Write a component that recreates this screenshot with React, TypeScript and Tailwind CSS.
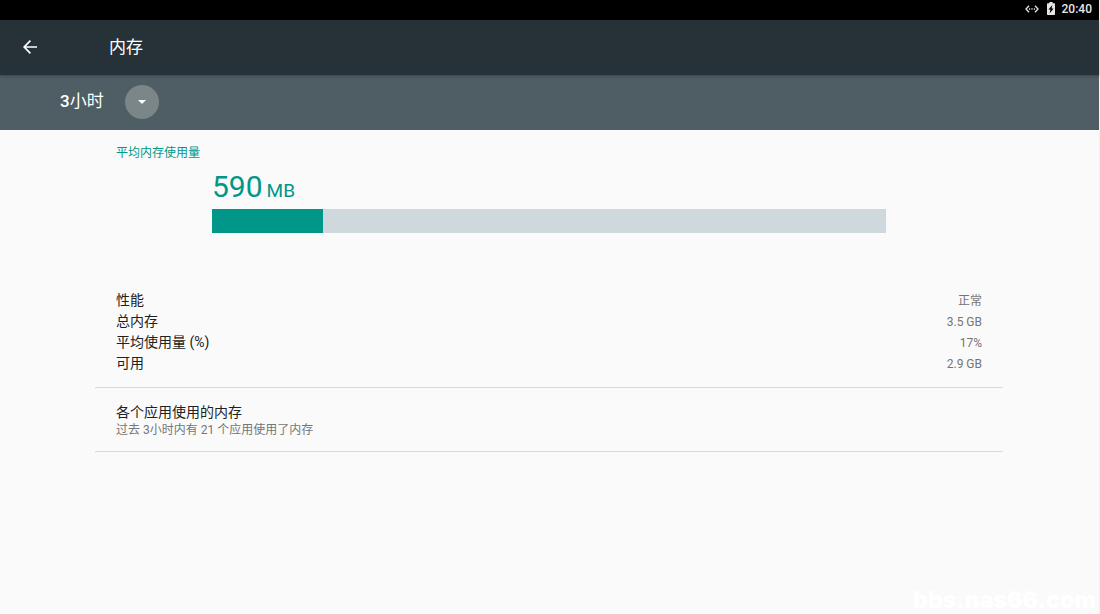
import { useState } from 'react'

const RANGES = ['3小时', '6小时', '12小时', '1天']

const STATS = [
  { label: '性能',           value: '正常' },
  { label: '总内存',         value: '3.5 GB' },
  { label: '平均使用量 (%)', value: '17%' },
  { label: '可用',           value: '2.9 GB' },
]

// used share of the bar, in percent
const USED = 16.5

function StatusBar() {
  return (
    <div className="h-5 flex items-center justify-end gap-2 pr-[7px] pb-[3px] bg-black text-[#e6e6e6]">
      <svg width="14" height="8" viewBox="0 0 14 8" fill="none" stroke="currentColor" strokeWidth="1.3">
        <path d="M4 0.8L1 4l3 3.2M10 0.8L13 4l-3 3.2" />
        <path d="M4 4h1.2M6.4 4h1.2M8.8 4h1.2" />
      </svg>
      <svg width="8" height="13" viewBox="0 0 8 13">
        <path fill="currentColor" d="M2.4 0h3.2v1.3H7.3a.7.7 0 0 1 .7.7v10.3a.7.7 0 0 1-.7.7H.7a.7.7 0 0 1-.7-.7V2a.7.7 0 0 1 .7-.7h1.7z" />
        <path fill="#000" d="M5.4 3L1.4 7.5h2L2.6 11.4l4-4.8h-2z" />
      </svg>
      <span className="text-[12px] leading-4 font-medium -ml-px">20:40</span>
    </div>
  )
}

// Time range drop-down, the caret disc sits over the right end of the select
function RangePicker() {
  const [range, setRange] = useState(RANGES[0])
  return (
    <div className="relative w-[99px] h-[34px]">
      <select
        aria-label="时间范围"
        value={range}
        onChange={e => setRange(e.target.value)}
        className="appearance-none w-full h-full bg-transparent text-white text-[17px] font-['Roboto_Medium',Roboto,'Noto_Sans_CJK_SC',sans-serif] outline-none">
        {RANGES.map(r => <option key={r} value={r} className="text-black">{r}</option>)}
      </select>
      <span className="absolute right-0 top-0 size-[34px] rounded-full bg-[#7b8689] flex items-center justify-center pointer-events-none">
        <svg width="8" height="4" viewBox="0 0 8 4" fill="#fff"><path d="M0 0h8L4 4z" /></svg>
      </span>
    </div>
  )
}

export default function App() {
  return (
    <div className="relative min-h-screen bg-[#fafafa] border-r border-[#f2f2f8] font-[Roboto,'Noto_Sans_CJK_SC',sans-serif]">
      <StatusBar />

      <header className="relative h-[55px] flex items-center pl-[23px] pb-px bg-[#263238] text-white shadow-[0_1px_3px_rgba(0,0,0,0.3)]">
        <button aria-label="返回" className="w-[86px]">
          <svg width="14" height="14" viewBox="0 0 14 14" fill="none" stroke="currentColor" strokeWidth="1.7">
            <path d="M14 7H1.4M7.4 0.7L1.2 7l6.2 6.3" />
          </svg>
        </button>
        <h1 className="text-[17px] leading-6">内存</h1>
      </header>

      <div className="h-[55px] flex items-center pl-[60px] pb-px bg-[#4f5e65]">
        <RangePicker />
      </div>

      <main className="pl-[95px] pr-24">
        <section className="px-[21px] pt-[13px]">
          <h2 className="text-[12px] leading-5 text-[#009688]">平均内存使用量</h2>
          <div className="px-24 pt-[7px]">
            <p className="flex items-baseline gap-1 text-[#009688]">
              <span className="text-[30px] leading-[34px]">590</span>
              <span className="text-[19px] leading-5">MB</span>
            </p>
            <div className="h-6 mt-[5px] bg-[#cfd8dc]">
              <div className="h-full bg-[#009688]" style={{ width: `${USED}%` }} />
            </div>
          </div>
        </section>

        <section className="px-[21px] pt-[57px] pb-[13px] border-b border-[#dadada]">
          <table className="w-full">
            <tbody>
              {STATS.map(s => (
                <tr key={s.label}>
                  <th scope="row" className="p-0 text-left text-[14px] leading-[21px] font-normal text-[#212121]">{s.label}</th>
                  <td className="p-0 pt-0.5 text-right text-[12px] leading-[19px] text-[#757575]">{s.value}</td>
                </tr>
              ))}
            </tbody>
          </table>
        </section>

        <button className="block w-full px-[21px] pt-[15px] pb-3 text-left border-b border-[#dadada]">
          <span className="block text-[14px] leading-[18px] text-[#212121]">各个应用使用的内存</span>
          <span className="block text-[12px] leading-[18px] text-[#757575]">过去 3小时内有 21 个应用使用了内存</span>
        </button>
      </main>

      <p className="absolute right-[3px] bottom-0 text-[23px] leading-7 font-black text-white font-[Inter,sans-serif]">bbs.nas66.com</p>
    </div>
  )
}
